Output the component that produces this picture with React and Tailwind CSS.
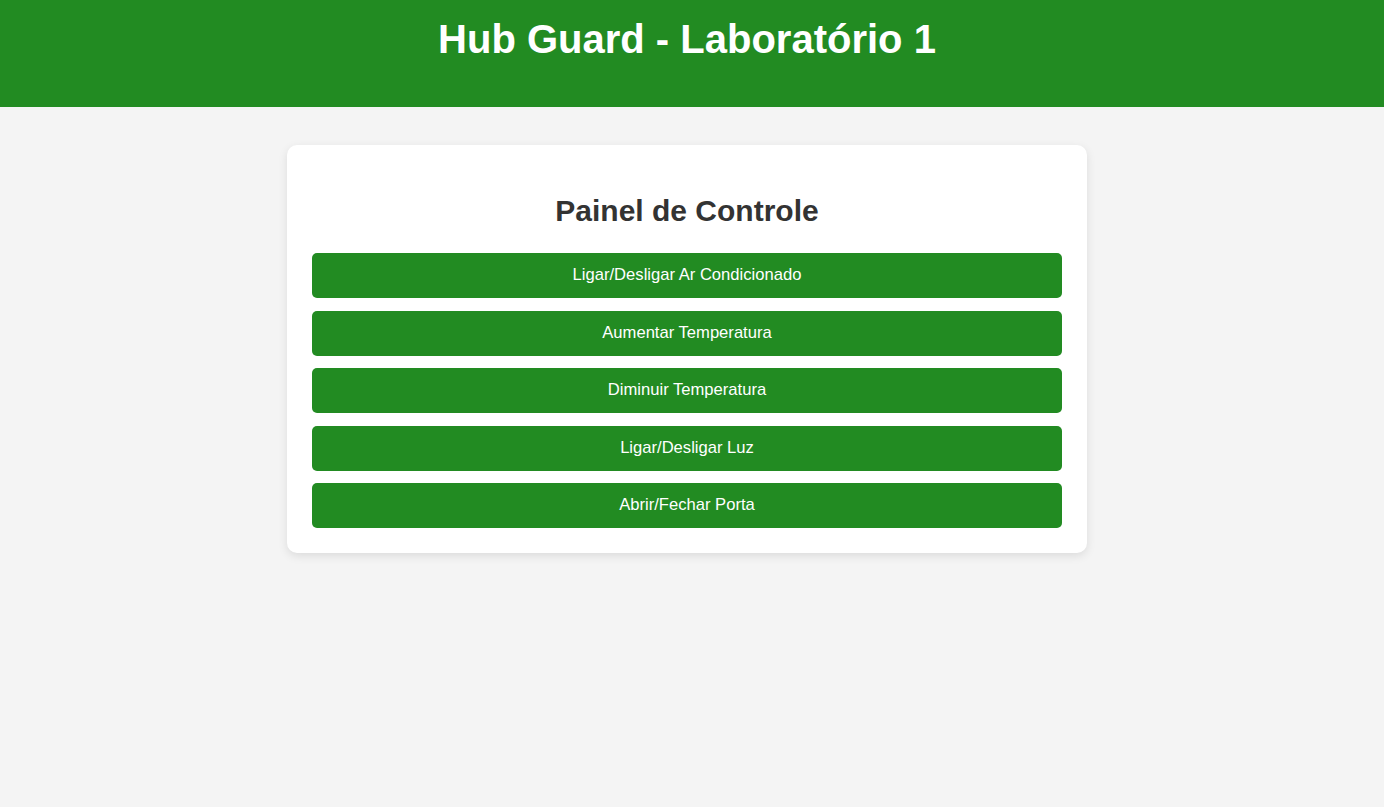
export default function App() {
  const buttons = [
    "Ligar/Desligar Ar Condicionado",
    "Aumentar Temperatura",
    "Diminuir Temperatura",
    "Ligar/Desligar Luz",
    "Abrir/Fechar Porta",
  ];
  return (
    <div
      className="min-h-[807px] bg-[#f4f4f4]"
      style={{ fontFamily: '"Liberation Sans", Arial, sans-serif' }}
    >
      <header className="h-[107px] bg-[#228b22] pr-[10px] pt-[16px] text-center">
        <h1 className="text-[40px] font-bold leading-[46px] text-white">
          Hub Guard - Laboratório 1
        </h1>
      </header>
      <main className="flex justify-center pr-[10px] pt-[38px]">
        <div className="w-[800px] rounded-[10px] bg-white p-[25px] shadow-[0_3px_10px_rgba(0,0,0,0.1)]">
          <h2 className="mb-[25px] mt-[23px] text-center text-[30px] font-bold leading-[35px] text-[#333]">
            Painel de Controle
          </h2>
          <div className="flex flex-col gap-[12.5px]">
            {buttons.map((b) => (
              <button
                key={b}
                className="h-[45px] w-full rounded-[5px] bg-[#228b22] text-[16.6px] text-white"
              >
                {b}
              </button>
            ))}
          </div>
        </div>
      </main>
    </div>
  );
}
